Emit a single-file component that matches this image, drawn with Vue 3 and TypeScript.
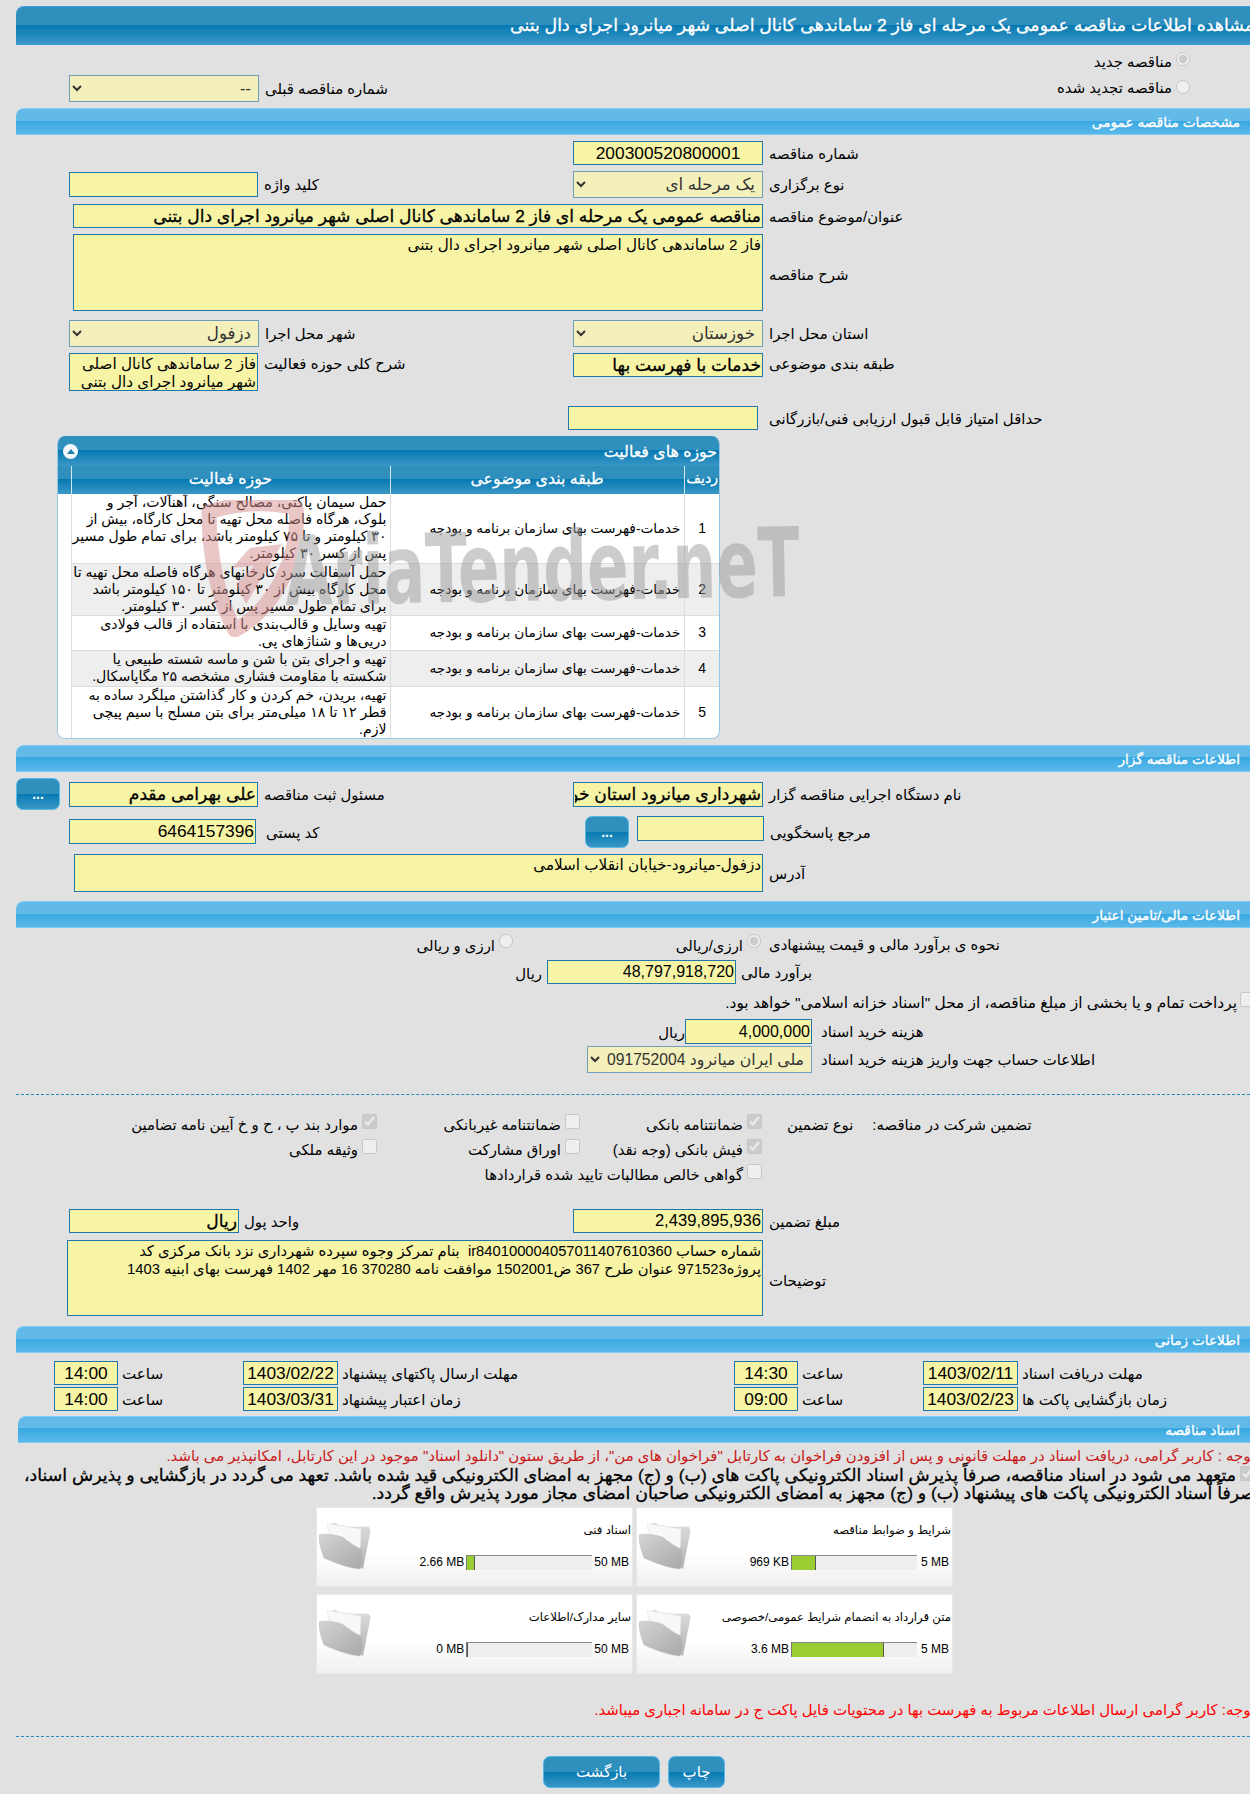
<script setup lang="ts">
interface Row { n: number; cat: string; lines: string[]; h: number }
interface Card { title: string; used: string; max: string; fill: number }

const cat = 'خدمات-فهرست بهای سازمان برنامه و بودجه'
const rows: Row[] = [
  { n: 1, cat, h: 69, lines: ['حمل سیمان پاکتی، مصالح سنگی، آهنآلات، آجر و', 'بلوک، هرگاه فاصله محل تهیه تا محل کارگاه، بیش از', '۳۰ کیلومتر و تا ۷۵ کیلومتر باشد، برای تمام طول مسیر', 'پس از کسر ۳۰ کیلومتر.'] },
  { n: 2, cat, h: 52, lines: ['حمل آسفالت سرد کارخانهای هرگاه فاصله محل تهیه تا', 'محل کارگاه بیش از ۳۰ کیلومتر تا ۱۵۰ کیلومتر باشد', 'برای تمام طول مسیر پس از کسر ۳۰ کیلومتر.'] },
  { n: 3, cat, h: 35, lines: ['تهیه وسایل و قالب‌بندی با استفاده از قالب فولادی', 'دریی‌ها و شناژهای پی.'] },
  { n: 4, cat, h: 36, lines: ['تهیه و اجرای بتن با شن و ماسه شسته طبیعی یا', 'شکسته با مقاومت فشاری مشخصه ۲۵ مگاپاسکال.'] },
  { n: 5, cat, h: 52, lines: ['تهیه، بریدن، خم کردن و کار گذاشتن میلگرد ساده به', 'قطر ۱۲ تا ۱۸ میلی‌متر برای بتن مسلح با سیم پیچی', 'لازم.'] },
]
const cards: Card[] = [
  { title: 'اسناد فنی', used: '2.66 MB', max: '50 MB', fill: 8 },
  { title: 'شرایط و ضوابط مناقصه', used: '969 KB', max: '5 MB', fill: 24 },
  { title: 'سایر مدارک/اطلاعات', used: '0 MB', max: '50 MB', fill: 1 },
  { title: 'متن قرارداد به انضمام شرایط عمومی/خصوصی', used: '3.6 MB', max: '5 MB', fill: 92 },
]
const notes = 'شماره حساب ir840100004057011407610360  بنام تمرکز وجوه سپرده شهرداری نزد بانک مرکزی کد\nپروژه971523 عنوان طرح 367 ض1502001 موافقت نامه 370280 16 مهر 1402 فهرست بهای ابنیه 1403'
</script>

<template>
  <div class="page">
    <div class="title"><span class="title-text">مشاهده اطلاعات مناقصه عمومی یک مرحله ای فاز 2 ساماندهی کانال اصلی شهر میانرود اجرای دال بتنی</span></div>

    <div class="radio-line first"><span class="t">مناقصه جدید</span><input type="radio" disabled checked name="kind" /></div>
    <div class="row prev">
      <select class="sel w190" disabled dir="rtl"><option>--</option></select>
      <span class="lbl">شماره مناقصه قبلی</span>
      <div class="radio-line second"><span class="t">مناقصه تجدید شده</span><input type="radio" disabled name="kind" /></div>
    </div>

    <div class="sec mt7"><span>مشخصات مناقصه عمومی</span></div>
    <div class="row mt6 h24">
      <div class="c1"></div>
      <input class="inp w190 center" readonly value="200300520800001" />
      <span class="lbl">شماره مناقصه</span>
    </div>
    <div class="row mt6 h27">
      <div class="c1"><input class="inp w189 h25" readonly dir="rtl" /><span class="lbl">کلید واژه</span></div>
      <select class="sel w190" disabled dir="rtl"><option>یک مرحله ای</option></select>
      <span class="lbl">نوع برگزاری</span>
    </div>
    <div class="row mt6 h24 ml73">
      <input class="inp w690 bold" readonly dir="rtl" value="مناقصه عمومی یک مرحله ای فاز 2 ساماندهی کانال اصلی شهر میانرود اجرای دال بتنی" />
      <span class="lbl">عنوان/موضوع مناقصه</span>
    </div>
    <div class="row mt6 h77 ml73">
      <textarea class="inp ta w690" readonly dir="rtl">فاز 2 ساماندهی کانال اصلی شهر میانرود اجرای دال بتنی</textarea>
      <span class="lbl low">شرح مناقصه</span>
    </div>
    <div class="row mt9 h27">
      <div class="c1"><select class="sel w190" disabled dir="rtl"><option>دزفول</option></select><span class="lbl">شهر محل اجرا</span></div>
      <select class="sel w190" disabled dir="rtl"><option>خوزستان</option></select>
      <span class="lbl">استان محل اجرا</span>
    </div>
    <div class="row mt6 h38 top">
      <div class="c1 top"><textarea class="inp ta w189 h38" readonly dir="rtl">فاز 2 ساماندهی کانال اصلی شهر میانرود اجرای دال بتنی</textarea><span class="lbl lt">شرح کلی حوزه فعالیت</span></div>
      <input class="inp w190 bold" readonly dir="rtl" value="خدمات با فهرست بها" />
      <span class="lbl lt">طبقه بندی موضوعی</span>
    </div>
    <div class="row mt15 h24">
      <div class="c568"></div>
      <input class="inp w190" readonly dir="rtl" />
      <span class="lbl gap11">حداقل امتیاز قابل قبول ارزیابی فنی/بازرگانی</span>
    </div>

    <div class="panel">
      <div class="panel-head">
        <span class="collapse"><i></i></span>
        <span>حوزه های فعالیت</span>
      </div>
      <table class="tbl" dir="rtl">
        <colgroup><col class="cn" /><col class="cc" /><col class="ca" /><col /></colgroup>
        <thead>
          <tr><th>ردیف</th><th>طبقه بندی موضوعی</th><th>حوزه فعالیت</th><th></th></tr>
        </thead>
        <tbody>
          <tr v-for="r in rows" :key="r.n" :style="{ height: r.h + 'px' }">
            <td class="num">{{ r.n }}</td>
            <td class="catc">{{ r.cat }}</td>
            <td class="act"><span v-for="l in r.lines" :key="l" class="ln">{{ l }}</span></td>
            <td class="blank"></td>
          </tr>
        </tbody>
      </table>
    </div>

    <div class="sec mt6"><span>اطلاعات مناقصه گزار</span></div>
    <div class="row mt6 h32 owner">
      <button class="btn dots" type="button">...</button>
      <input class="inp w189 h25 bold ml9" readonly dir="rtl" value="علی بهرامی مقدم" />
      <span class="lbl grow">مسئول ثبت مناقصه</span>
      <input class="inp w190 h25 bold" readonly dir="rtl" value="شهرداری میانرود استان خوزستان" />
      <span class="lbl">نام دستگاه اجرایی مناقصه گزار</span>
    </div>
    <div class="row mt6 h32 top">
      <div class="c585 top">
        <input class="inp w187 h25 ml69 mt3" readonly dir="rtl" value="6464157396" />
        <span class="lbl gap10 lt2">کد پستی</span>
      </div>
      <button class="btn dots" type="button">...</button>
      <input class="inp w127 h25 ml8" readonly dir="rtl" />
      <span class="lbl lt2">مرجع پاسخگویی</span>
    </div>
    <div class="row mt6 h38 ml74">
      <textarea class="inp ta w689" readonly dir="rtl">دزفول-میانرود-خیابان انقلاب اسلامی</textarea>
      <span class="lbl">آدرس</span>
    </div>

    <div class="sec mt9"><span>اطلاعات مالی/تامین اعتبار</span></div>
    <div class="row h32 how">
      <div class="end w513"><span class="t">ارزی و ریالی</span><input type="radio" disabled name="cur" /></div>
      <div class="end w248"><span class="t">ارزی/ریالی</span><input type="radio" disabled checked name="cur" /></div>
      <span class="lbl gap8">نحوه ی برآورد مالی و قیمت پیشنهادی</span>
    </div>
    <div class="row h24">
      <div class="end w542"><span class="t">ریال</span></div>
      <input class="inp w189 ml5 n16" readonly dir="rtl" value="48,797,918,720" />
      <span class="lbl gap5">برآورد مالی</span>
    </div>
    <div class="treasury">
      <input type="checkbox" disabled />
      <span class="t">پرداخت تمام و یا بخشی از مبلغ مناقصه، از محل "اسناد خزانه اسلامی" خواهد بود.</span>
    </div>
    <div class="row mt3 h25">
      <div class="end w685"><span class="t">ریال</span></div>
      <input class="inp w127 h25 n16" readonly dir="rtl" value="4,000,000" />
      <span class="lbl gap9">هزینه خرید اسناد</span>
    </div>
    <div class="row mt2 h26">
      <div class="w587"></div>
      <select class="sel w225" disabled dir="rtl"><option>ملی ایران میانرود 010091752004</option></select>
      <span class="lbl gap9">اطلاعات حساب جهت واریز هزینه خرید اسناد</span>
    </div>

    <div class="dash d1"></div>

    <div class="guar">
      <div class="gi"><span class="t">موارد بند پ ، ح و خ آیین نامه تضامین</span><input type="checkbox" disabled checked /></div>
      <div class="gi"><span class="t">ضمانتنامه غیربانکی</span><input type="checkbox" disabled /></div>
      <div class="gi"><span class="t">ضمانتنامه بانکی</span><input type="checkbox" disabled checked /></div>
      <div class="ghead"><span class="t">نوع تضمین</span><span class="t gh2">تضمین شرکت در مناقصه:</span></div>

      <div class="gi"><span class="t">وثیقه ملکی</span><input type="checkbox" disabled /></div>
      <div class="gi"><span class="t">اوراق مشارکت</span><input type="checkbox" disabled /></div>
      <div class="gi"><span class="t">فیش بانکی (وجه نقد)</span><input type="checkbox" disabled checked /></div>
      <div></div>

      <div class="gi wide"><span class="t">گواهی خالص مطالبات تایید شده قراردادها</span><input type="checkbox" disabled /></div>
    </div>

    <div class="row mt20 h24">
      <div class="c1"><input class="inp w170 bold" readonly dir="rtl" value="ریال" /><span class="lbl gap5">واحد پول</span></div>
      <input class="inp w190 n166" readonly dir="rtl" value="2,439,895,936" />
      <span class="lbl">مبلغ تضمین</span>
    </div>
    <div class="row mt7 h76 ml67">
      <textarea class="inp ta w696 nt" readonly dir="rtl" :value="notes"></textarea>
      <span class="lbl low">توضیحات</span>
    </div>

    <div class="sec mt10"><span>اطلاعات زمانی</span></div>
    <div class="times mt8">
      <div class="tc"><input class="inp tm" readonly value="14:00" /><span class="t">ساعت</span></div>
      <div class="tc"><input class="inp dt" readonly value="1403/02/22" /><span class="t">مهلت ارسال پاکتهای پیشنهاد</span></div>
      <div class="tc"><input class="inp tm" readonly value="14:30" /><span class="t">ساعت</span></div>
      <div class="tc"><input class="inp dt" readonly value="1403/02/11" /><span class="t">مهلت دریافت اسناد</span></div>

      <div class="tc"><input class="inp tm" readonly value="14:00" /><span class="t">ساعت</span></div>
      <div class="tc"><input class="inp dt" readonly value="1403/03/31" /><span class="t">زمان اعتبار پیشنهاد</span></div>
      <div class="tc"><input class="inp tm" readonly value="09:00" /><span class="t">ساعت</span></div>
      <div class="tc"><input class="inp dt" readonly value="1403/02/23" /><span class="t">زمان بازگشایی پاکت ها</span></div>
    </div>

    <div class="sec docs"><span>اسناد مناقصه</span></div>
    <div class="notice dark">توجه : کاربر گرامی، دریافت اسناد در مهلت قانونی و پس از افزودن فراخوان به کارتابل "فراخوان های من"، از طریق ستون "دانلود اسناد" موجود در این کارتابل، امکانپذیر می باشد.</div>
    <div class="pledge" dir="rtl">
      <input type="checkbox" disabled checked />
      <span>متعهد می شود در اسناد مناقصه، صرفاً پذیرش اسناد الکترونیکی پاکت های (ب) و (ج) مجهز به امضای الکترونیکی قید شده باشد. تعهد می گردد در بازگشایی و پذیرش اسناد،</span><br />
      <span>صرفاً اسناد الکترونیکی پاکت های پیشنهاد (ب) و (ج) مجهز به امضای الکترونیکی صاحبان امضای مجاز مورد پذیرش واقع گردد.</span>
    </div>

    <div class="cards">
      <div v-for="c in cards" :key="c.title" class="card">
        <svg class="folder" viewBox="0 0 52 48" aria-hidden="true">
          <defs>
            <linearGradient id="fg" x1="0" y1="0" x2="1" y2="1">
              <stop offset="0" stop-color="#d4d4d4" />
              <stop offset="1" stop-color="#a8a8a8" />
            </linearGradient>
            <linearGradient id="bk" x1="0" y1="0" x2="0" y2="1">
              <stop offset="0" stop-color="#dedede" />
              <stop offset="1" stop-color="#b0b0b0" />
            </linearGradient>
          </defs>
          <path d="M9 3 L16 0.5 L20 3 C30 5 40 5 47 4.5 C51 4.5 52 7 51 11 L44 47 L12 24 Z" fill="url(#bk)" />
          <path d="M8 1.5 L42 7 L41 30 L12 22 Z" fill="#f8f8f8" stroke="#e4e4e4" stroke-width=".5" />
          <path d="M0 13 C8 11 17 13 23 15 C29 19 36 25 42 27 C44 34 44 42 41 47 C28 46 12 39 5 36 C2 27 0 21 0 13 Z" fill="url(#fg)" stroke="#bdbdbd" stroke-width="0.6" />
        </svg>
        <div class="card-body">
          <div class="card-title">{{ c.title }}</div>
          <div class="prog">
            <span class="pv">{{ c.used }}</span>
            <span class="bar"><span class="barfill" :style="{ width: c.fill + 'px' }"></span></span>
            <span class="pv pmax">{{ c.max }}</span>
          </div>
        </div>
      </div>
    </div>

    <div class="notice red">توجه: کاربر گرامی ارسال اطلاعات مربوط به فهرست بها در محتویات فایل پاکت ج در سامانه اجباری میباشد.</div>
    <div class="dash d2"></div>
    <div class="actions">
      <button class="btn back" type="button">بازگشت</button>
      <button class="btn print" type="button">چاپ</button>
    </div>

    <div class="wm" aria-hidden="true">
      <svg class="wm-logo" viewBox="0 0 105 137">
        <path d="M9 12 C40 2 70 2 96 8 C100 50 80 105 35 130 C18 100 9 55 9 12 Z" fill="none" stroke="#d98f8f" stroke-width="15" stroke-linejoin="round" />
        <path d="M50 48 L82 44 L46 104 L36 84 L54 66 L32 68 Z" fill="#d98f8f" />
      </svg>
      <span class="wm-text">AriaTender.neT</span>
    </div>
  </div>
</template>

<style scoped>
.page {
  position: relative;
  width: 1250px;
  height: 1794px;
  overflow: hidden;
  padding-top: 6px;
  box-sizing: border-box;
  background: #e1e1e1;
  font-family: "Liberation Sans", "DejaVu Sans", sans-serif;
  font-size: 14.9px;
  color: #000;
}
.title {
  height: 39px;
  margin-left: 16px;
  box-sizing: border-box;
  border-top: 1px solid #3a9ee0;
  border-bottom: 1px solid #3a9ee0;
  border-radius: 8px 0 0 0;
  background: linear-gradient(#2f8fbd 0, #2f8fbd 50%, #0779b2 50%, #3a97c6 100%);
  color: #fff;
  font-size: 17.33px;
  -webkit-text-stroke: .3px #fff;
  direction: rtl;
  display: flex;
  align-items: center;
  white-space: nowrap;
}
.title-text { margin-right: -4px; }
.radio-line { display: flex; align-items: flex-start; direction: ltr; justify-content: flex-end; }
.radio-line input { margin: 0 0 0 4px; width: 14px; height: 14px; }
.radio-line.first { height: 30px; padding: 7px 60px 0 0; box-sizing: border-box; }
.radio-line.first .t { margin-top: 1px; }
.radio-line.second { margin-left: auto; padding-right: 60px; }
.radio-line.second input { margin-top: 1px; }
.row { display: flex; align-items: center; }
.row.top { align-items: flex-start; }
.prev { height: 26px; padding-left: 69px; }
.c1 { width: 573px; display: flex; align-items: center; padding-left: 69px; box-sizing: border-box; flex: none; }
.c1.top { align-items: flex-start; }
.c568 { width: 568px; flex: none; }
.c585 { width: 585px; flex: none; display: flex; }
.lbl, .t { direction: rtl; unicode-bidi: isolate; white-space: nowrap; }
.lbl { margin-left: 6px; padding-top: 1px; }
.low { padding-top: 5px; }
.lt { padding-top: 2px; }
.lt2 { padding-top: 8px; }
.gap5 { margin-left: 5px; }
.gap8 { margin-left: 8px; }
.gap9 { margin-left: 9px; }
.gap10 { margin-left: 10px; }
.gap11 { margin-left: 11px; }
.grow { width: 315px; flex: none; text-align: left; box-sizing: border-box; margin-left: 0; padding-left: 6px; direction: ltr; }
.inp {
  box-sizing: border-box;
  height: 24px;
  margin: 0;
  padding: 0 1px;
  border: 1px solid #1f78aa;
  border-radius: 0;
  background: #f7f4a5;
  font-family: inherit;
  font-size: 17.33px;
  color: #000;
  outline: none;
  text-align: right;
}
.center { text-align: center; }
.bold { font-size: 17.1px; -webkit-text-stroke: .3px #000; }
.n16 { font-size: 16px; }
.n166 { font-size: 16.6px; }
.ta { resize: none; overflow: hidden; font-size: 15.2px; line-height: 18px; height: 100%; padding-top: 1px; }
.nt { font-size: 14.75px; }
.sel {
  box-sizing: border-box;
  height: 27px;
  margin: 0;
  padding: 0 3px;
  border: 1px solid #6f9dbb;
  border-radius: 0;
  background-color: #f3f0bb;
  font-family: inherit;
  font-size: 16.7px;
  color: #333;
  opacity: 1;
}
.w127 { width: 127px; }
.w170 { width: 170px; }
.w187 { width: 187px; }
.w189 { width: 189px; }
.w190 { width: 190px; }
.w225 { width: 225px; font-size: 15.7px; }
.w689 { width: 689px; }
.w690 { width: 690px; }
.w696 { width: 696px; }
.h24 { height: 24px; }
.h25 { height: 25px; }
.h26 { height: 26px; }
.h27 { height: 27px; }
.h32 { height: 32px; }
.h38 { height: 38px; }
.h76 { height: 76px; }
.h77 { height: 77px; }
.mt2 { margin-top: 2px; }
.mt3 { margin-top: 3px; }
.mt6 { margin-top: 6px; }
.mt7 { margin-top: 7px; }
.mt8 { margin-top: 8px; }
.mt9 { margin-top: 9px; }
.mt10 { margin-top: 10px; }
.mt15 { margin-top: 15px; }
.mt20 { margin-top: 20px; }
.ml5 { margin-left: 5px; }
.ml8 { margin-left: 8px; }
.ml9 { margin-left: 9px; }
.ml67 { margin-left: 67px; }
.ml69 { margin-left: 69px; }
.ml73 { margin-left: 73px; }
.ml74 { margin-left: 74px; }
.owner { padding-left: 16px; }
.sec {
  height: 27px;
  margin-left: 16px;
  box-sizing: border-box;
  border-bottom: 1px solid #7bcdf4;
  border-top: 1px solid #7bcdf4;
  border-radius: 8px 0 0 0;
  background: linear-gradient(#62bae9 0, #62bae9 46%, #39a8e1 46%, #5ab8ea 100%);
  color: #fff;
  font-size: 13.7px;
  -webkit-text-stroke: .3px #fff;
  direction: rtl;
  display: flex;
  align-items: center;
  padding-right: 10px;
  white-space: nowrap;
}
.docs { margin: 5px 0 0 18px; }
.panel {
  margin: 6px 0 0 57px;
  width: 663px;
  height: 303px;
  box-sizing: border-box;
  border: 1px solid #96c8e6;
  border-top: none;
  border-radius: 8px;
  background: #fff;
  overflow: hidden;
}
.panel-head {
  height: 30px;
  box-sizing: border-box;
  background: linear-gradient(#2f8fbd 0, #2f8fbd 48%, #0779b2 48%, #3a97c6 100%);
  color: #fff;
  font-size: 15.8px;
  -webkit-text-stroke: .3px #fff;
  display: flex;
  justify-content: space-between;
  align-items: center;
  padding: 0 2px 0 5px;
  direction: ltr;
}
.collapse {
  width: 15px;
  height: 15px;
  border-radius: 50%;
  background: #f4f8fb;
  display: flex;
  align-items: center;
  justify-content: center;
}
.collapse i {
  width: 0;
  height: 0;
  border-left: 4px solid transparent;
  border-right: 4px solid transparent;
  border-bottom: 5px solid #1f7fae;
}
.tbl { width: 662px; table-layout: fixed; border-collapse: collapse; }
.cn { width: 36px; }
.cc { width: 294px; }
.ca { width: 319px; }
.tbl th {
  height: 28px;
  padding: 0 0 4px;
  box-sizing: border-box;
  background: linear-gradient(#2f8fbd 0, #2f8fbd 48%, #0779b2 48%, #3a97c6 100%);
  border-left: 1px solid #cfe6f3;
  color: #fff;
  font-weight: normal;
  -webkit-text-stroke: .3px #fff;
  font-size: 15.8px;
  text-align: center;
}
.tbl th:first-child { font-size: 14.2px; }
.tbl th:last-child { border-left: 0; }
.tbl td {
  padding: 0 3px;
  border-left: 1px solid #dcdcdc;
  border-bottom: 1px solid #dcdcdc;
  line-height: 17px;
  text-align: right;
  vertical-align: middle;
  white-space: nowrap;
}
.catc { font-size: 13.7px; }
.act { font-size: 14.1px; }
.ln { display: block; }
.tbl tbody tr:nth-child(even) td { background: #eee; }
.tbl td.num { text-align: center; font-size: 14px; }
.tbl tbody tr td.blank { background: #fff; border: 0; }
.how { align-items: flex-start; }
.how .end { margin-top: 6px; }
.how .lbl { padding-top: 8px; }
.end { display: flex; justify-content: flex-end; align-items: flex-start; flex: none; }
.end input { margin: 0 0 0 4px; width: 14px; height: 14px; }
.end .t { margin-top: 3px; }
.w248 { width: 248px; }
.w513 { width: 513px; }
.w542 { width: 542px; }
.w587 { width: 587px; flex: none; }
.w685 { width: 685px; }
.treasury {
  height: 24px;
  margin-top: 8px;
  display: flex;
  justify-content: flex-start;
  align-items: flex-start;
  direction: rtl;
  margin-right: -5px;
}
.treasury input { margin: 0 0 0 3px; width: 15px; height: 15px; flex: none; }
.treasury .t { padding-top: 2px; font-size: 15.4px; }
.dash { margin-left: 16px; border-top: 1px dashed #2589bb; }
.d1 { margin-top: 22px; }
.d2 { margin-top: 16px; }
.guar {
  margin-top: 19px;
  display: grid;
  grid-template-columns: 377px 203px 182px 1fr;
  grid-auto-rows: 25px;
}
.gi { display: flex; justify-content: flex-end; align-items: flex-start; }
.gi input { margin: 0 0 0 4px; width: 15px; height: 15px; flex: none; }
.gi .t { margin-top: 2px; }
.wide { grid-column: 1 / span 3; }
.ghead { display: flex; align-items: flex-start; padding: 2px 0 0 25px; }
.gh2 { margin-left: 19px; }
.times {
  margin-left: 54px;
  display: grid;
  grid-template-columns: 189px 491px 189px 1fr;
  grid-auto-rows: 24px;
  row-gap: 2px;
}
.tc { display: flex; align-items: center; gap: 4px; }
.tc .t { padding-top: 1px; font-size: 15.1px; }
.tm { width: 64px; text-align: center; }
.dt { width: 95px; text-align: center; }
.notice {
  direction: rtl;
  white-space: nowrap;
  margin-right: -5px;
  height: 20px;
  line-height: 20px;
}
.dark { color: #c81818; margin-top: 3px; }
.red { color: #f00; margin-top: 26px; }
.pledge {
  height: 41px;
  margin-right: -5px;
  font-size: 17.33px;
  -webkit-text-stroke: .3px #000;
  line-height: 18px;
  white-space: nowrap;
}
.pledge input { margin: 0 0 0 4px; width: 15px; height: 15px; vertical-align: top; }
.cards {
  margin-left: 316px;
  width: 637px;
  display: grid;
  grid-template-columns: 317px 317px;
  column-gap: 3px;
  row-gap: 7px;
}
.card {
  height: 80px;
  box-sizing: border-box;
  display: flex;
  background: linear-gradient(#fff 0, #fff 60%, #efefef 100%);
  border: 1px solid #e8e8e8;
  padding: 14px 3px 0 2px;
}
.folder { width: 52px; height: 48px; flex: none; }
.card-body { flex: 1; direction: rtl; }
.card-title { height: 22px; font-size: 11.7px; line-height: 20px; white-space: nowrap; margin: -2px -2px 0 0; }
.prog { direction: ltr; display: flex; justify-content: flex-end; align-items: center; margin-top: 12px; font-size: 12px; height: 16px; gap: 2px; }
.bar {
  width: 126px;
  height: 15px;
  box-sizing: border-box;
  background: #eee;
  border-top: 1px solid #888;
  border-left: 1px solid #777;
  display: block;
}
.barfill { display: block; height: 100%; background: #9acd32; border-right: 1px solid #555; box-sizing: border-box; }
.pv { white-space: nowrap; }
.pmax { min-width: 30px; text-align: right; }
.actions { margin: 19px 0 0 543px; display: flex; gap: 8px; }
.btn {
  height: 32px;
  box-sizing: border-box;
  border: 1px solid #55b9e6;
  border-radius: 7px;
  padding: 0;
  background: linear-gradient(#2f8fbd 0, #2f8fbd 50%, #0779b2 50%, #3a97c6 100%);
  color: #fff;
  font-family: inherit;
  font-size: 15px;
  flex: none;
}
.back { width: 117px; }
.print { width: 57px; }
.dots { width: 44px; font-weight: bold; font-size: 14px; }
.wm { position: absolute; left: 200px; top: 500px; pointer-events: none; opacity: .5; }
.wm-logo { position: absolute; left: 0; top: 0; width: 105px; height: 137px; }
.wm-text {
  position: absolute;
  left: 85px;
  top: 17px;
  font-family: "DejaVu Sans Condensed", "DejaVu Sans", sans-serif;
  font-weight: bold;
  font-size: 96px;
  line-height: 110px;
  color: #9c9c9c;
  white-space: nowrap;
  transform-origin: left center;
  transform: rotate(-1deg) scaleX(.71);
}
</style>

<style>
html, body { margin: 0; background: #e1e1e1; overflow: hidden; }
</style>
